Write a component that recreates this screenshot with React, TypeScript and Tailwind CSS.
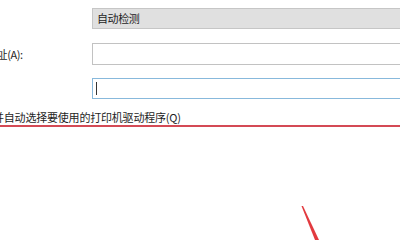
export default function App() {
  return (
    <div className="relative w-[400px] h-[240px] overflow-hidden bg-white text-[#1e1e1e] font-['Noto_Sans_CJK_SC','Noto_Sans',sans-serif] text-[11px] tracking-[-0.4px]">
      {/* 设备类型 */}
      <div className="flex items-center pt-[8px]">
        <div className="w-[92px] shrink-0" />
        <div className="flex-1 mr-[-20px] h-[21px] flex items-center pl-[4px] bg-[#e0e0e0] border border-[#c6c6c6]">
          自动检测
        </div>
      </div>

      {/* 主机名或 IP 地址 */}
      <div className="flex items-center mt-[14px]">
        <div className="w-[92px] shrink-0 overflow-hidden">
          <span className="block ml-[-14px] whitespace-nowrap">地址(A):</span>
        </div>
        <div className="flex-1 mr-[-20px] h-[22px] bg-white border border-[#c2c2c2]" />
      </div>

      {/* 端口名称 */}
      <div className="flex items-center mt-[13px]">
        <div className="w-[92px] shrink-0" />
        <div className="flex-1 mr-[-20px] h-[21px] flex items-center pl-[3px] bg-white border border-[#88b9dc]">
          <div className="w-px h-[13px] bg-[#333]" />
        </div>
      </div>

      {/* 查询打印机 */}
      <div className="mt-[11px] h-[15px] leading-[15px] whitespace-nowrap ml-[-7px] tracking-[-0.2px]">
        并自动选择要使用的打印机驱动程序(Q)
      </div>
      <div className="h-[2px] bg-[#d44a55]" />

      <svg className="absolute left-0 top-0" width="400" height="240" viewBox="0 0 400 240">
        <polygon points="301.5,206 303,206 319,240 315,240" fill="#e23a3f" />
      </svg>
    </div>
  );
}
